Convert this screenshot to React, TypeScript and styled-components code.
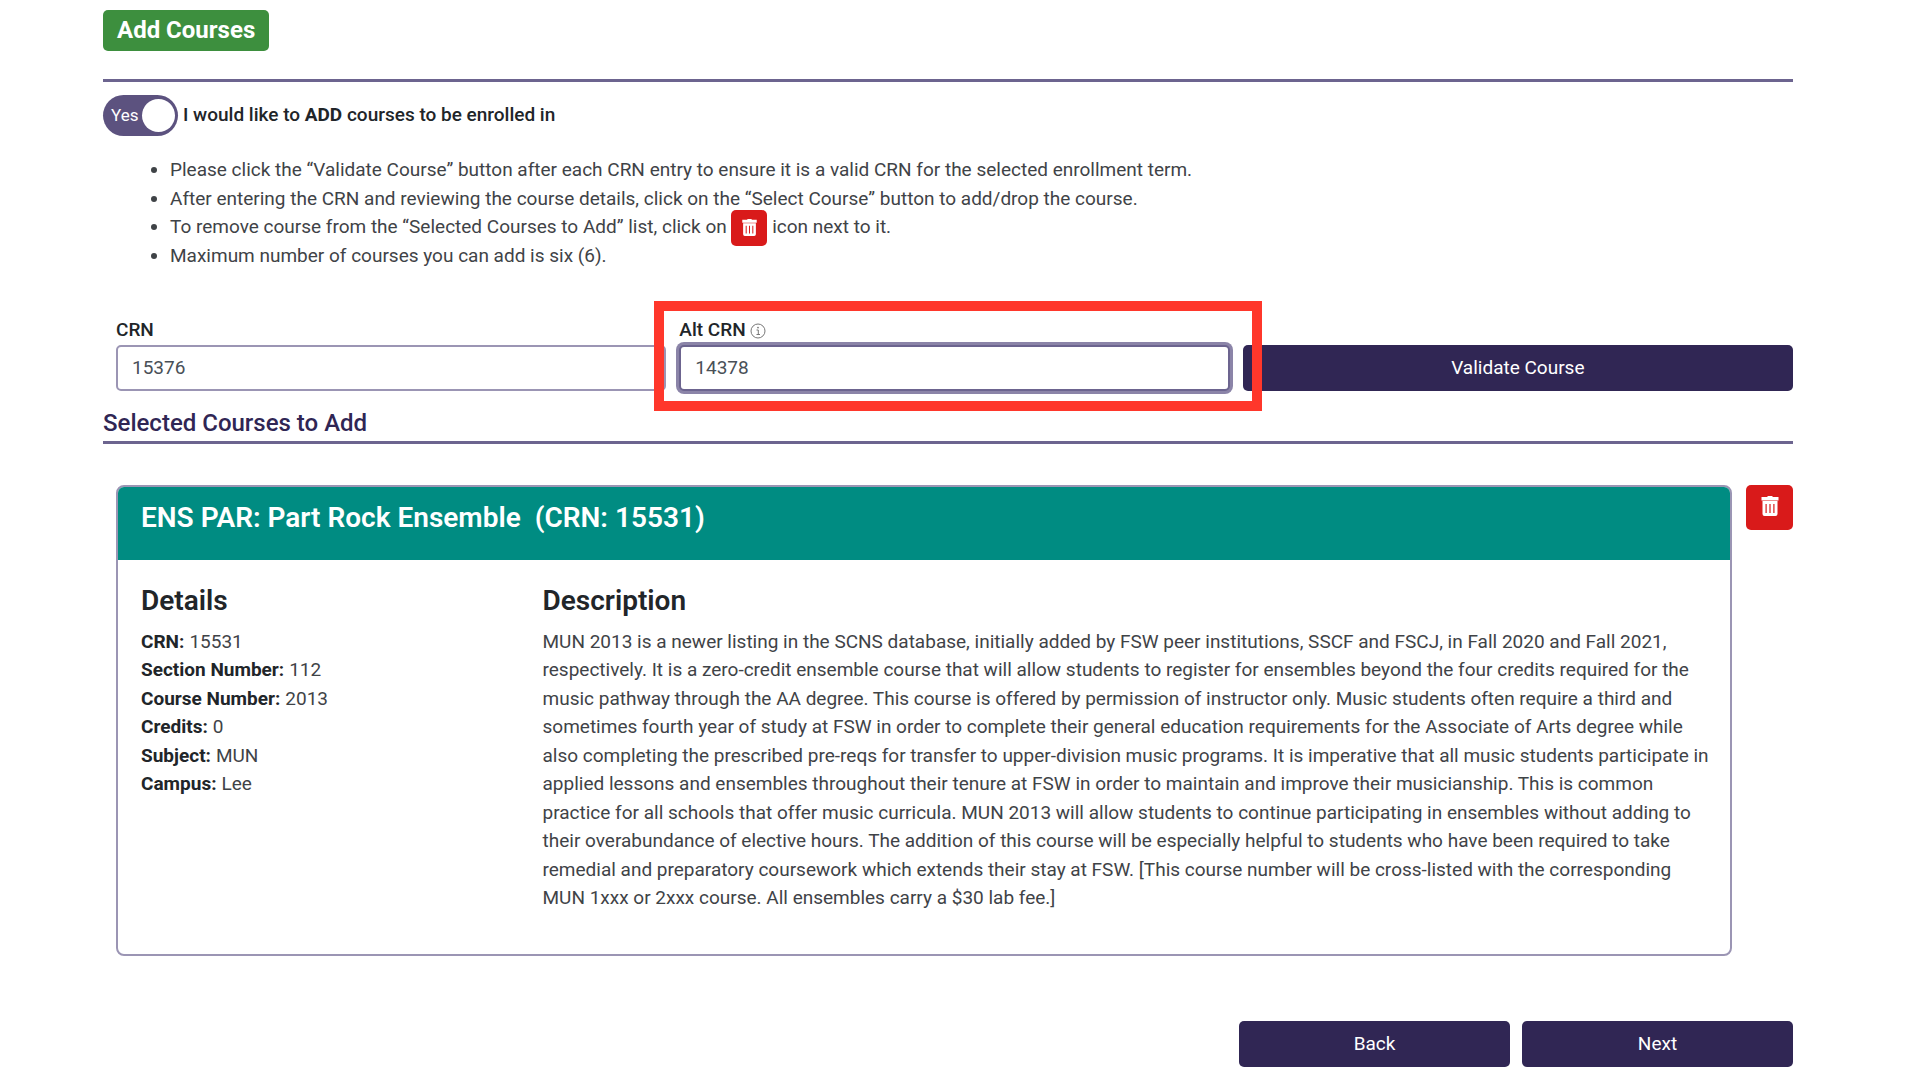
import React, { useState } from "react";
import styled, { createGlobalStyle } from "styled-components";

const color = {
  ink: "#212529",
  text: "#3f4347",
  navy: "#302654",
  purple: "#5c527f",
  line: "#6c648f",
  border: "#9b95b4",
  teal: "#008c82",
  green: "#3d8f3e",
  red: "#d91a1a",
  marker: "#ff372b",
};

const GlobalStyle = createGlobalStyle`
  *, *::before, *::after { box-sizing: border-box; }
  body {
    margin: 0;
    background: #fff;
    color: ${color.text};
    font-family: Roboto, "Liberation Sans", sans-serif;
    font-size: 19px;
    line-height: 1.5;
  }
  button, input { font: inherit; }
`;

const Page = styled.main`
  padding: 10px 127px 13px 103px;
`;

const Badge = styled.h1`
  display: inline-block;
  margin: 0;
  padding: 0 14px;
  border-radius: 5px;
  background: ${color.green};
  color: #fff;
  font-size: 24px;
  font-weight: 700;
  line-height: 41px;
  vertical-align: top;
`;

const Rule = styled.hr<{ $top?: number }>`
  height: 3px;
  margin: ${(p) => p.$top ?? 0}px 0 0;
  border: 0;
  background: ${color.line};
`;

const ToggleRow = styled.label`
  display: flex;
  align-items: center;
  gap: 5px;
  margin-top: 13px;
  color: ${color.ink};
  font-weight: 500;
  cursor: pointer;
`;

const Switch = styled.span`
  display: inline-grid;
  align-items: center;
  width: 75px;
  height: 41px;
  > * { grid-area: 1 / 1; }
`;

const SwitchInput = styled.input`
  appearance: none;
  display: flex;
  align-items: center;
  justify-content: flex-end;
  width: 75px;
  height: 41px;
  margin: 0;
  padding: 4px 3px;
  border-radius: 21px;
  background: ${color.purple};
  cursor: pointer;
  &:not(:checked) { justify-content: flex-start; background: #999; }
  &::before {
    content: "";
    width: 33px;
    height: 33px;
    border-radius: 50%;
    background: #fff;
  }
`;

const SwitchText = styled.span`
  padding-left: 8px;
  color: #fff;
  font-size: 17px;
  font-weight: 400;
  pointer-events: none;
`;

const Notes = styled.ul`
  margin: 20px 0 0;
  padding-left: 67px;
`;

const IconButton = styled.button<{ $small?: boolean }>`
  display: inline-flex;
  align-items: ${(p) => (p.$small ? "center" : "flex-start")};
  justify-content: center;
  width: ${(p) => (p.$small ? 36 : 47)}px;
  height: ${(p) => (p.$small ? 36 : 45)}px;
  margin: ${(p) => (p.$small ? "-4px 0" : "0")};
  padding: ${(p) => (p.$small ? 0 : "11px 0 0")};
  border: 0;
  border-radius: 5px;
  background: ${color.red};
  color: #fff;
  vertical-align: middle;
  cursor: pointer;
`;

const CourseForm = styled.form`
  display: grid;
  grid-template-columns: repeat(3, 1fr);
  gap: 13px;
  align-items: end;
  margin-top: 46px;
  padding-left: 13px;
`;

const Field = styled.div`
  position: relative;
  display: flex;
  flex-direction: column;
`;

const FieldLabel = styled.label`
  display: flex;
  align-items: center;
  gap: 4px;
  color: ${color.ink};
  font-weight: 500;
  svg { color: #777; }
`;

const TextInput = styled.input<{ $active?: boolean }>`
  width: 100%;
  height: 46px;
  padding: 0 14px;
  border: 2px solid ${(p) => (p.$active ? color.line : color.border)};
  border-radius: 5px;
  outline: 0;
  background: #fff;
  box-shadow: ${(p) => (p.$active ? "0 0 0 3px #8b84a8" : "none")};
  color: #495057;
`;

const Marker = styled.div`
  position: absolute;
  z-index: 1;
  inset: -15px -32px -20px -25px;
  border: 10px solid ${color.marker};
  pointer-events: none;
`;

const NavyButton = styled.button`
  height: 46px;
  padding: 0;
  border: 0;
  border-radius: 5px;
  background: ${color.navy};
  color: #fff;
  cursor: pointer;
`;

const SectionTitle = styled.h2`
  margin: 14px 0 0;
  color: ${color.navy};
  font-size: 24px;
  font-weight: 500;
  line-height: 36px;
`;

const SelectedRow = styled.div`
  display: flex;
  align-items: flex-start;
  gap: 14px;
  margin-top: 41px;
  padding-left: 13px;
`;

const Card = styled.article`
  flex: 1;
  overflow: hidden;
  border: 2px solid ${color.border};
  border-radius: 8px;
`;

const CardHeader = styled.header`
  padding: 14px 23px 25px;
  background: ${color.teal};
`;

const CardTitle = styled.h3`
  margin: 0;
  color: #fff;
  font-size: 28px;
  font-weight: 600;
  line-height: 34px;
  white-space: pre-wrap;
`;

const CardBody = styled.div`
  display: grid;
  grid-template-columns: 1fr 3fr;
  gap: 11px;
  padding: 24px 16px 41px 23px;
`;

const ColumnTitle = styled.h4`
  margin: 0 0 10px;
  color: ${color.ink};
  font-size: 28px;
  font-weight: 600;
  line-height: 34px;
`;

const Paragraph = styled.p`
  margin: 0;
`;

const DetailList = styled.dl`
  margin: 0;
`;

const Detail = styled.div`
  display: flex;
  gap: 5px;
  dt { color: ${color.ink}; font-weight: 700; }
  dd { margin: 0; }
`;

const Footer = styled.footer`
  display: grid;
  grid-template-columns: repeat(2, 271px);
  justify-content: end;
  gap: 12px;
  margin-top: 65px;
`;

const TrashIcon = ({ size }: { size: number }) => (
  <svg width={size} height={size} viewBox="0 0 20 20" aria-hidden="true">
    <path
      fill="currentColor"
      fillRule="evenodd"
      d="M7 1 8 0h4l1 1h5.500v3.500h-17V1zM2.500 5h15v13a2 2 0 0 1-2 2h-11a2 2 0 0 1-2-2zM5.500 8v9h1.200V8zM9.400 8v9h1.200V8zM13.300 8v9h1.200V8z"
    />
  </svg>
);

const InfoIcon = () => (
  <svg width="16" height="16" viewBox="0 0 16 16" aria-hidden="true">
    <circle cx="8" cy="8" r="7" fill="none" stroke="currentColor" />
    <path d="M6.500 7H8.300V11.500M6.500 11.500H10" fill="none" stroke="currentColor" />
    <circle cx="8" cy="4.600" r="0.900" fill="currentColor" />
  </svg>
);

const details = [
  ["CRN", "15531"],
  ["Section Number", "112"],
  ["Course Number", "2013"],
  ["Credits", "0"],
  ["Subject", "MUN"],
  ["Campus", "Lee"],
];

export default function App() {
  const [adding, setAdding] = useState(true);
  return (
    <>
      <GlobalStyle />
      <Page>
        <Badge>Add Courses</Badge>
        <Rule $top={28} />
        <ToggleRow>
          <Switch>
            <SwitchInput
              type="checkbox"
              role="switch"
              checked={adding}
              onChange={(e) => setAdding(e.target.checked)}
            />
            {adding && <SwitchText>Yes</SwitchText>}
          </Switch>
          <span>
            I would like to <b>ADD</b> courses to be enrolled in
          </span>
        </ToggleRow>
        <Notes>
          <li>
            Please click the “Validate Course” button after each CRN entry to ensure it is a valid CRN for the
            selected enrollment term.
          </li>
          <li>
            After entering the CRN and reviewing the course details, click on the “Select Course” button to
            add/drop the course.
          </li>
          <li>
            To remove course from the “Selected Courses to Add” list, click on{" "}
            <IconButton $small type="button" aria-label="Remove course">
              <TrashIcon size={17} />
            </IconButton>{" "}
            icon next to it.
          </li>
          <li>Maximum number of courses you can add is six (6).</li>
        </Notes>
        <CourseForm onSubmit={(e) => e.preventDefault()}>
          <Field>
            <FieldLabel htmlFor="crn">CRN</FieldLabel>
            <TextInput id="crn" defaultValue="15376" />
          </Field>
          <Field>
            <FieldLabel htmlFor="alt-crn">
              Alt CRN <InfoIcon />
            </FieldLabel>
            <TextInput id="alt-crn" defaultValue="14378" $active />
            <Marker />
          </Field>
          <NavyButton type="submit">Validate Course</NavyButton>
        </CourseForm>
        <SectionTitle>Selected Courses to Add</SectionTitle>
        <Rule />
        <SelectedRow>
          <Card>
            <CardHeader>
              <CardTitle>{"ENS PAR: Part Rock Ensemble  (CRN: 15531)"}</CardTitle>
            </CardHeader>
            <CardBody>
              <section>
                <ColumnTitle>Details</ColumnTitle>
                <DetailList>
                  {details.map(([name, value]) => (
                    <Detail key={name}>
                      <dt>{name}:</dt>
                      <dd>{value}</dd>
                    </Detail>
                  ))}
                </DetailList>
              </section>
              <section>
                <ColumnTitle>Description</ColumnTitle>
                <Paragraph>
                  MUN 2013 is a newer listing in the SCNS database, initially added by FSW peer institutions,
                  SSCF and FSCJ, in Fall 2020 and Fall 2021, respectively. It is a zero-credit ensemble course
                  that will allow students to register for ensembles beyond the four credits required for the
                  music pathway through the AA degree. This course is offered by permission of instructor only.
                  Music students often require a third and sometimes fourth year of study at FSW in order to
                  complete their general education requirements for the Associate of Arts degree while also
                  completing the prescribed pre-reqs for transfer to upper-division music programs. It is
                  imperative that all music students participate in applied lessons and ensembles throughout
                  their tenure at FSW in order to maintain and improve their musicianship. This is common
                  practice for all schools that offer music curricula. MUN 2013 will allow students to continue
                  participating in ensembles without adding to their overabundance of elective hours. The
                  addition of this course will be especially helpful to students who have been required to take
                  remedial and preparatory coursework which extends their stay at FSW. [This course number will
                  be cross-listed with the corresponding MUN 1xxx or 2xxx course. All ensembles carry a $30 lab
                  fee.]
                </Paragraph>
              </section>
            </CardBody>
          </Card>
          <IconButton type="button" aria-label="Remove ENS PAR: Part Rock Ensemble">
            <TrashIcon size={20} />
          </IconButton>
        </SelectedRow>
        <Footer>
          <NavyButton type="button">Back</NavyButton>
          <NavyButton type="button">Next</NavyButton>
        </Footer>
      </Page>
    </>
  );
}
